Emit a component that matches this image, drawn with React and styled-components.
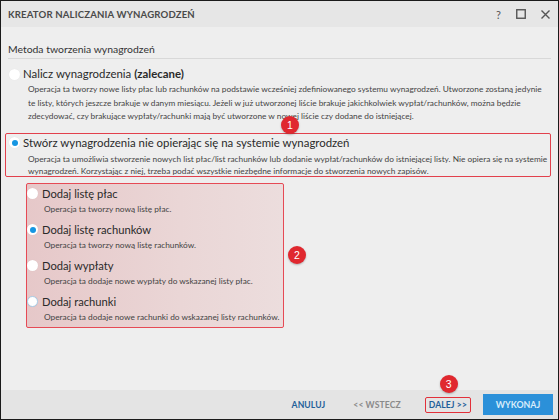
import React from 'react';
import styled, { createGlobalStyle } from 'styled-components';

const GlobalStyle = createGlobalStyle`
  html, body { margin: 0; padding: 0; background: #ffffff; }
  body { font-family: Lato, "Noto Sans", sans-serif; }
  * { box-sizing: border-box; }
`;

const Window = styled.div`
  width: 559px;
  height: 420px;
  border: 1px solid #1a1a1a;
  background: #eeeeee;
  display: flex;
  flex-direction: column;
  color: #333;
`;

const TitleBar = styled.div`
  height: 26px;
  flex: none;
  background: #e6e6e6;
  display: flex;
  align-items: center;
  justify-content: space-between;
  padding: 0 8px 0 7px;
`;

const Title = styled.div`
  font-size: 9.6px;
  font-weight: bold;
  color: #4a4a4a;
  letter-spacing: 0.15px;
`;

const WinButtons = styled.div`
  display: flex;
  align-items: center;
  gap: 15px;
  color: #555;
  font-size: 11px;
`;

const Content = styled.div`
  flex: 1;
  padding: 15px 7px 0 7px;
  display: flex;
  flex-direction: column;
`;

const SectionTitle = styled.div`
  font-size: 10.4px;
  line-height: 14px;
  color: #333;
  padding-bottom: 2px;
  border-bottom: 1px solid #d8d8d8;
  margin-bottom: 7px;
`;

const Option = styled.div`
  position: relative;
  padding: ${p => p.$pad || '0'};
  margin-bottom: ${p => p.$gap || 0}px;
  margin-right: ${p => p.$mr || 0}px;
`;

const HighlightBox = styled.div`
  position: relative;
  border: 1px solid #e2404c;
  border-radius: 2px;
  margin-left: -3px;
  padding: 1px 0 0 3px;
  height: 44px;
`;

const Label = styled.label`
  display: flex;
  align-items: center;
  gap: ${p => p.$sub ? '4px' : '3px'};
  font-size: ${p => p.$sub ? '11.2px' : '11.4px'};
  font-weight: 400;
  color: #2a2a2a;
  line-height: 16px;
  b { font-weight: bold; }
`;

const Radio = styled.span`
  width: 11px;
  height: 11px;
  border-radius: 50%;
  background: #fff;
  display: inline-flex;
  align-items: center;
  justify-content: center;
  flex: none;
  border: ${p => p.$focus ? '1px solid #a8cde8' : 'none'};
  box-shadow: 0 0 1px rgba(0,0,0,0.08);
  &::after {
    content: '';
    width: 6px;
    height: 6px;
    border-radius: 50%;
    background: ${p => p.$checked ? '#1596e2' : 'transparent'};
  }
`;

const Desc = styled.div`
  font-size: 8.3px;
  line-height: ${p => p.$lh || 13}px;
  color: #444;
  padding-left: ${p => p.$sub ? '17px' : '19px'};
  margin-top: ${p => p.$mt || 1}px;
  white-space: ${p => p.$sub ? 'nowrap' : 'normal'};
`;

const SubGroup = styled.div`
  position: relative;
  width: 258px;
  margin: 6px 0 0 18px;
  padding: 2px 0 3px 0;
  border: 1px solid #e64a55;
  border-radius: 2px;
  background: linear-gradient(90deg, #e6c8c9 0%, #ead6d6 60%, #ecdddd 100%);
  display: flex;
  flex-direction: column;
  gap: 6px;
`;

const Badge = styled.span`
  position: absolute;
  width: 18px;
  height: 18px;
  border-radius: 50%;
  background: #e0282f;
  color: #fff;
  font-size: 10.5px;
  font-weight: normal;
  font-family: "Liberation Sans", Arial, sans-serif;
  display: flex;
  align-items: center;
  justify-content: center;
  box-shadow: 0 1px 2px rgba(0,0,0,0.25);
  z-index: 2;
`;

const Badge1 = styled(Badge)`
  left: 275px;
  top: -18px;
`;

const Badge2 = styled(Badge)`
  right: -23px;
  top: 62px;
`;

const Footer = styled.div`
  height: 29px;
  flex: none;
  background: #e4e4e4;
  display: flex;
  align-items: center;
  justify-content: flex-end;
  padding-right: 5px;
`;

const TextButton = styled.button`
  position: relative;
  background: transparent;
  border: ${p => p.$marked ? '1px solid #e2303a' : '1px solid transparent'};
  border-radius: 2px;
  font-family: Lato, "Noto Sans", sans-serif;
  font-size: 8.6px;
  font-weight: bold;
  color: ${p => p.$muted ? '#8a8a8a' : '#1f5f99'};
  padding: 2px 3px;
  margin-right: ${p => p.$mr || 0}px;
  cursor: pointer;
  letter-spacing: 0.1px;
`;

const Badge3 = styled(Badge)`
  left: 14px;
  top: -23px;
`;

const PrimaryButton = styled.button`
  width: 70px;
  height: 21px;
  background: #2b90d9;
  border: none;
  color: #d7ecfa;
  font-family: Lato, "Noto Sans", sans-serif;
  font-size: 8.8px;
  font-weight: bold;
  cursor: pointer;
`;

const subOptions = [
  { label: 'Dodaj listę płac', desc: 'Operacja ta tworzy nową listę płac.' },
  { label: 'Dodaj listę rachunków', desc: 'Operacja ta tworzy nową listę rachunków.', checked: true },
  { label: 'Dodaj wypłaty', desc: 'Operacja ta dodaje nowe wypłaty do wskazanej listy płac.' },
  { label: 'Dodaj rachunki', desc: 'Operacja ta dodaje nowe rachunki do wskazanej listy rachunków.', focus: true },
];

export default function App() {
  return (
    <>
      <GlobalStyle />
      <Window>
        <TitleBar>
          <Title>KREATOR NALICZANIA WYNAGRODZEŃ</Title>
          <WinButtons>
            <span>?</span>
            <svg width="10" height="10" viewBox="0 0 10 10">
              <rect x="0.75" y="0.75" width="8.5" height="8.5" fill="none" stroke="#555" strokeWidth="1.4" />
            </svg>
            <svg width="9" height="9" viewBox="0 0 9 9">
              <path d="M0.5 0.5L8.5 8.5M8.5 0.5L0.5 8.5" stroke="#555" strokeWidth="1.4" />
            </svg>
          </WinButtons>
        </TitleBar>
        <Content>
          <SectionTitle>Metoda tworzenia wynagrodzeń</SectionTitle>
          <Option $pad="0 0 0 1px" $gap={9} $mr={-4}>
            <Label><Radio />Nalicz wynagrodzenia <b>(zalecane)</b></Label>
            <Desc $lh={13.5}>
              Operacja ta tworzy nowe listy płac lub rachunków na podstawie wcześniej zdefiniowanego systemu wynagrodzeń. Utworzone zostaną jedynie<br />
              te listy, których jeszcze brakuje w danym miesiącu. Jeżeli w już utworzonej liście brakuje jakichkolwiek wypłat/rachunków, można będzie<br />
              zdecydować, czy brakujące wypłaty/rachunki mają być utworzone w nowej liście czy dodane do istniejącej.
            </Desc>
          </Option>
          <HighlightBox>
            <Badge1>1</Badge1>
            <Option>
              <Label><Radio $checked />Stwórz wynagrodzenia nie opierając się na systemie wynagrodzeń</Label>
              <Desc $lh={12.5} $mt={2}>
                Operacja ta umożliwia stworzenie nowych list płac/list rachunków lub dodanie wypłat/rachunków do istniejącej listy. Nie opiera się na systemie wynagrodzeń. Korzystając z niej, trzeba podać wszystkie niezbędne informacje do stworzenia nowych zapisów.
              </Desc>
            </Option>
          </HighlightBox>
          <SubGroup>
            <Badge2>2</Badge2>
            {subOptions.map(o => (
              <Option key={o.label} $pad="0 0 0 0">
                <Label $sub><Radio $checked={o.checked} $focus={o.focus} />{o.label}</Label>
                <Desc $sub>{o.desc}</Desc>
              </Option>
            ))}
          </SubGroup>
        </Content>
        <Footer>
          <TextButton $mr={20}>ANULUJ</TextButton>
          <TextButton $muted $mr={20}>&lt;&lt; WSTECZ</TextButton>
          <TextButton $marked $mr={12}>
            <Badge3>3</Badge3>
            DALEJ &gt;&gt;
          </TextButton>
          <PrimaryButton>WYKONAJ</PrimaryButton>
        </Footer>
      </Window>
    </>
  );
}
